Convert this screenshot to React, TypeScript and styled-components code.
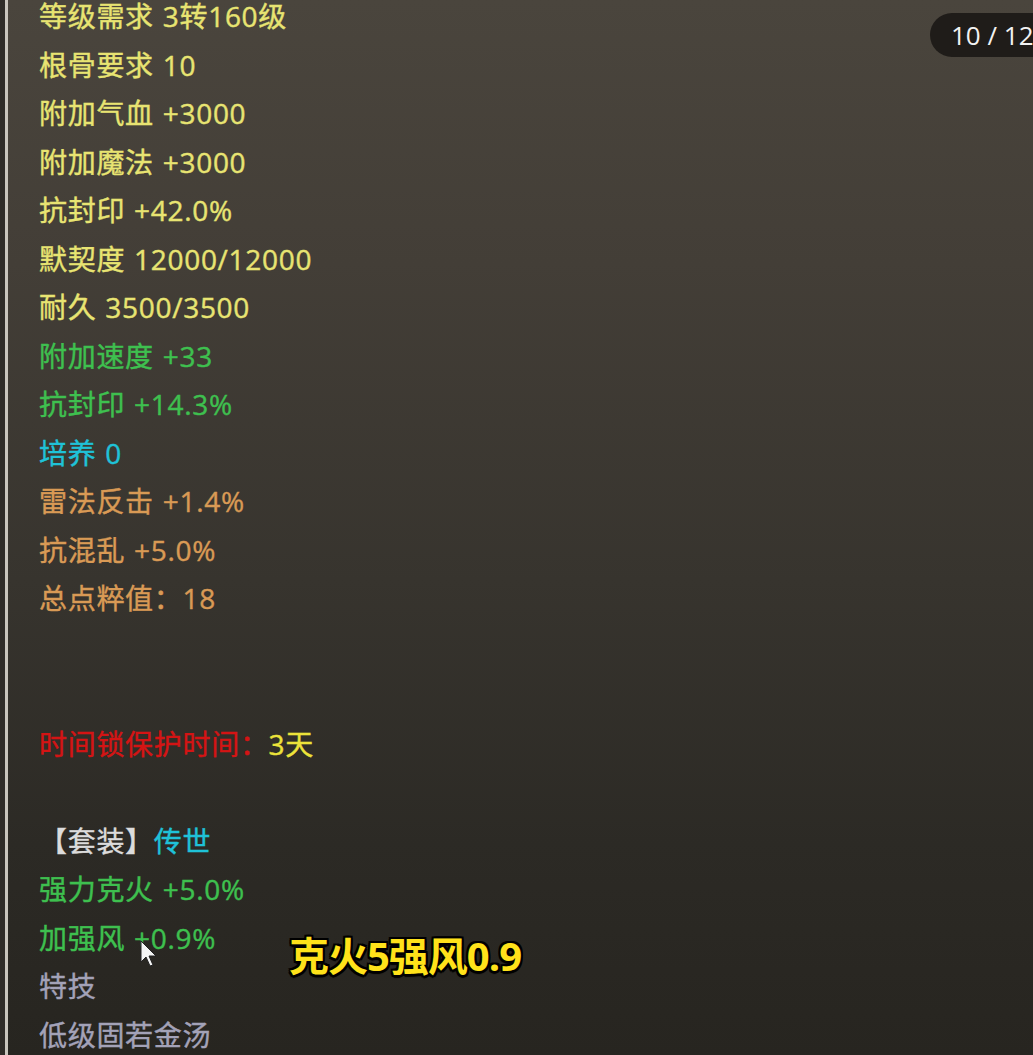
import React from "react";
import styled, { createGlobalStyle } from "styled-components";

const Global = createGlobalStyle`
  html, body { margin: 0; padding: 0; }
  body {
    width: 1033px;
    height: 1055px;
    overflow: hidden;
    background: #2a2823;
    font-family: "Open Sans", "Noto Sans CJK SC", sans-serif;
  }
`;

const Screen = styled.div`
  position: relative;
  width: 1033px;
  height: 1055px;
  overflow: hidden;
  display: flex;
  background: linear-gradient(180deg, #4a453d 0%, #433e37 25%, #37342e 55%, #2c2a25 80%, #272520 100%);
`;

const EdgeDark = styled.div`
  width: 5px;
  flex: none;
  background: #2f2c28;
`;

const EdgeLine = styled.div`
  width: 3px;
  flex: none;
  background: #c9c5bd;
`;

const List = styled.div`
  display: flex;
  flex-direction: column;
  padding-left: 31px;
  margin-top: -8px;
`;

const Row = styled.div<{ $c: string }>`
  height: 48.5px;
  line-height: 48.5px;
  font-family: "Open Sans", "Noto Sans CJK SC", sans-serif;
  font-size: 28px;
  font-weight: 400;
  letter-spacing: 0.7px;
  word-spacing: 1px;
  -webkit-text-stroke: 0.4px ${(p) => p.$c};
  color: ${(p) => p.$c};
  white-space: pre;
`;

const Span = styled.span<{ $c: string }>`
  color: ${(p) => p.$c};
  -webkit-text-stroke: 0.4px ${(p) => p.$c};
`;

const Badge = styled.div`
  position: absolute;
  top: 13px;
  left: 930px;
  height: 44px;
  padding: 0 20px 0 21px;
  border-radius: 22px;
  background: #1f1c19;
  color: #f2f2f2;
  font-family: "Open Sans", sans-serif;
  font-size: 26px;
  line-height: 44px;
  white-space: pre;
`;

const Caption = styled.div`
  position: absolute;
  left: 289px;
  top: 927px;
  font-family: "Open Sans", "Noto Sans CJK SC", sans-serif;
  font-size: 40px;
  font-weight: 700;
  color: #ffe21a;
  line-height: 58px;
  letter-spacing: -1px;
  white-space: pre;
  text-shadow: -2px -2px 0 #000, 2px -2px 0 #000, -2px 2px 0 #000, 2px 2px 0 #000,
    0 2px 0 #000, 0 -2px 0 #000, 2px 0 0 #000, -2px 0 0 #000, 0 3px 1px #000;
`;

const Cursor = styled.svg`
  position: absolute;
  left: 140px;
  top: 940px;
`;

const YELLOW = "#e8e472";
const GREEN = "#3ec04f";
const CYAN = "#1fc2d8";
const ORANGE = "#d99a55";
const RED = "#d41414";
const GRAY = "#a3a2b8";
const WHITE = "#dcdcdc";
const GOLD = "#ece33a";

type Item = { t: string; c: string } | null;

const rows: Item[] = [
  { t: "等级需求 3转160级", c: YELLOW },
  { t: "根骨要求 10", c: YELLOW },
  { t: "附加气血 +3000", c: YELLOW },
  { t: "附加魔法 +3000", c: YELLOW },
  { t: "抗封印 +42.0%", c: YELLOW },
  { t: "默契度 12000/12000", c: YELLOW },
  { t: "耐久 3500/3500", c: YELLOW },
  { t: "附加速度 +33", c: GREEN },
  { t: "抗封印 +14.3%", c: GREEN },
  { t: "培养 0", c: CYAN },
  { t: "雷法反击 +1.4%", c: ORANGE },
  { t: "抗混乱 +5.0%", c: ORANGE },
  { t: "总点粹值：18", c: ORANGE },
  null,
  null,
];

const tail: { t: string; c: string }[] = [
  { t: "强力克火 +5.0%", c: GREEN },
  { t: "加强风 +0.9%", c: GREEN },
  { t: "特技", c: GRAY },
  { t: "低级固若金汤", c: GRAY },
];

export default function App() {
  return (
    <>
      <Global />
      <Screen>
        <EdgeDark />
        <EdgeLine />
        <List>
          {rows.map((r, i) => (
            <Row key={i} $c={r ? r.c : YELLOW}>
              {r ? r.t : " "}
            </Row>
          ))}
          <Row $c={RED}>
            时间锁保护时间：<Span $c={GOLD}>3天</Span>
          </Row>
          <Row $c={WHITE}> </Row>
          <Row $c={WHITE}>
            【套装】<Span $c={CYAN}>传世</Span>
          </Row>
          {tail.map((r, i) => (
            <Row key={"t" + i} $c={r.c}>
              {r.t}
            </Row>
          ))}
        </List>
        <Badge>10 / 12</Badge>
        <Caption>克火5强风0.9</Caption>
        <Cursor width="18" height="28" viewBox="0 0 18 28">
          <path d="M1 1 L1 22 L6 17 L10 26 L13 25 L9 16 L16 16 Z" fill="#f4f4f4" stroke="#222" strokeWidth="1" />
        </Cursor>
      </Screen>
    </>
  );
}
